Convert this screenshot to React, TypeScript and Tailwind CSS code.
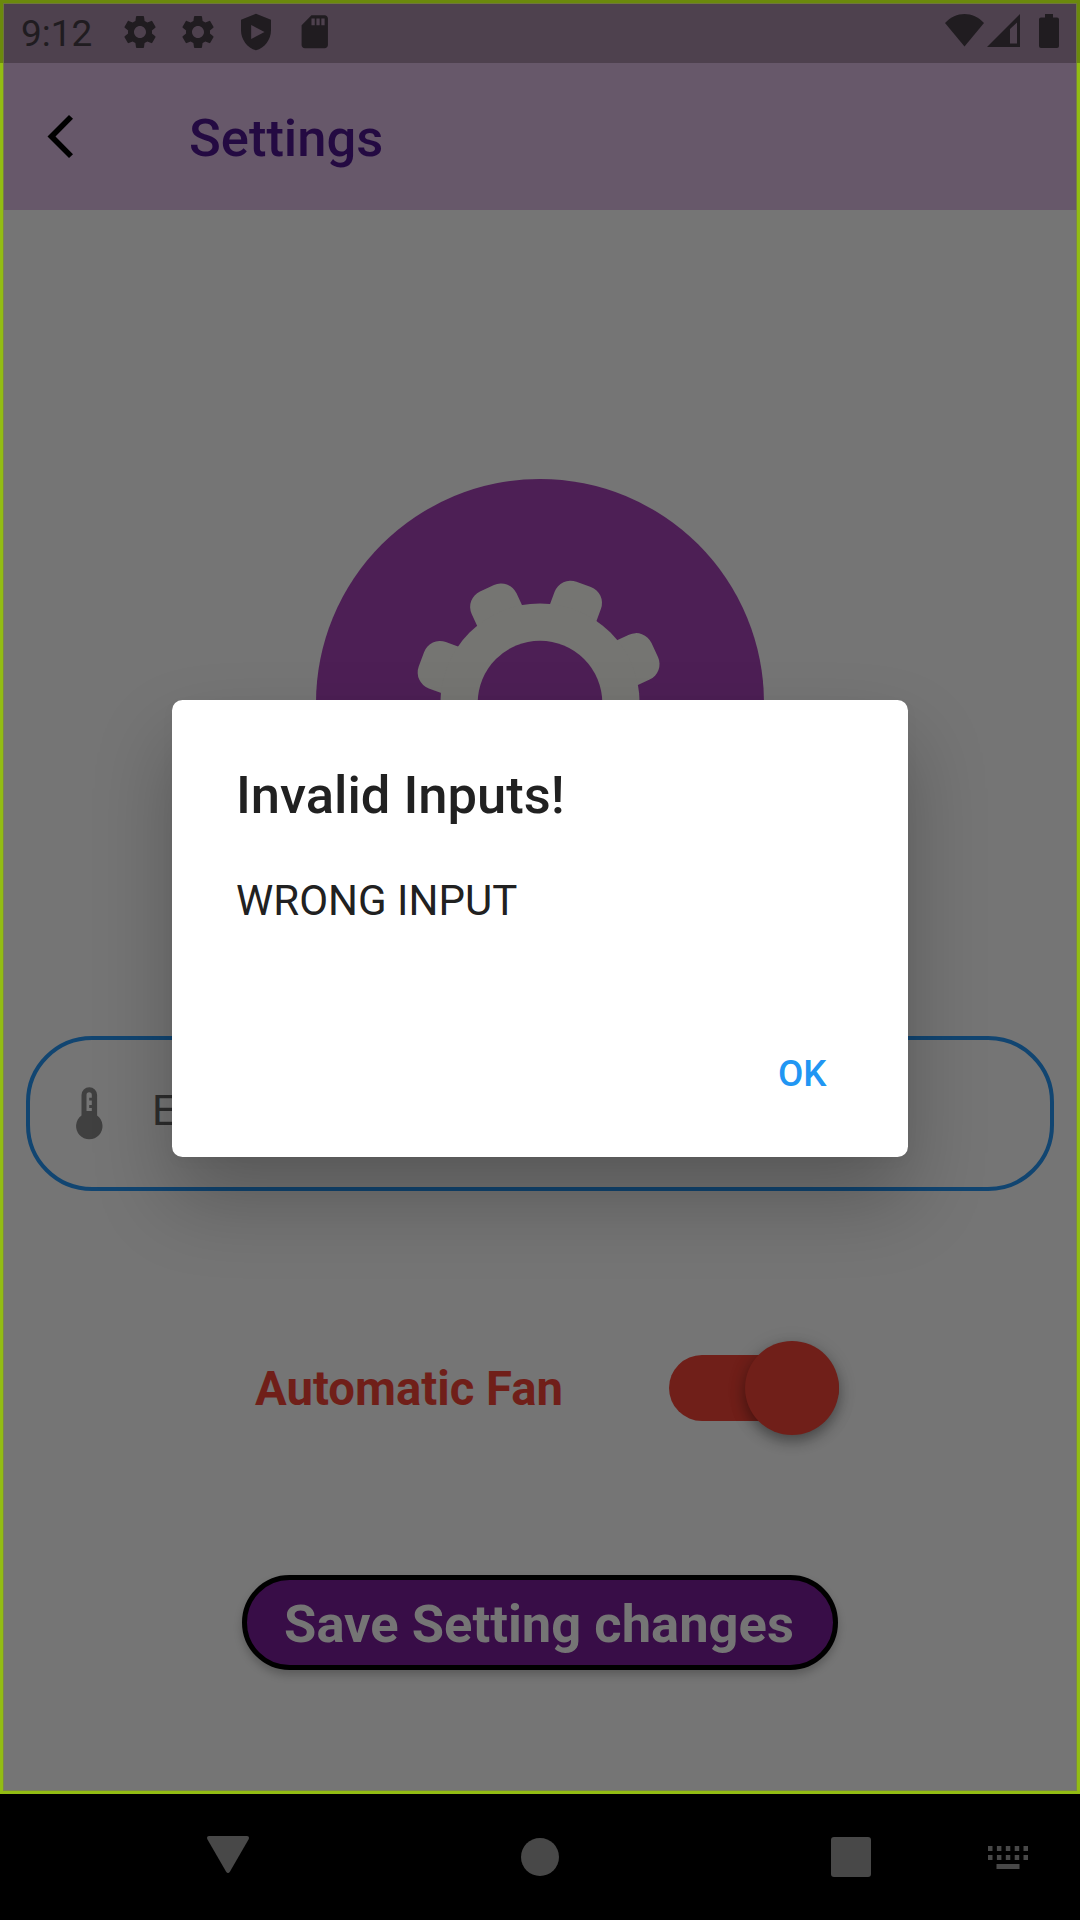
import React from "react";
import { MdSettings, MdSdCard } from "react-icons/md";

function StatusBar() {
  return (
    <div className="flex h-[63px] items-start justify-between bg-[#4e414e] text-[#201c20]">
      <div className="flex items-start">
        <span className="ml-[21px] mt-[12px] w-[99px] text-[37px] leading-[44px]">9:12</span>
        <MdSettings className="mt-[12px] size-[40px]" />
        <MdSettings className="ml-[18px] mt-[12px] size-[40px]" />
        <svg className="ml-[18px] mt-[12px] size-[40px]" viewBox="0 0 24 24" fill="currentColor" fillRule="evenodd">
          <path d="M12 1 3 4.6V11c0 5.55 3.84 10.74 9 12 5.16-1.26 9-6.45 9-12V4.600z M9.100 7.800l8 4.200-8 4.200z" />
        </svg>
        <MdSdCard className="ml-[19px] mt-[12px] size-[39.500px]" />
      </div>
      <div className="flex items-start">
        <svg className="mt-[14px] h-[33px] w-[39px]" viewBox="0 0 39 33" fill="currentColor">
          <path d="M0 9C11-3 28-3 39 9L19.500 32.500z" />
        </svg>
        <svg className="ml-[3px] mt-[14px] h-[33px] w-[33px]" viewBox="0 0 33 33" fill="currentColor" fillRule="evenodd">
          <path d="M33 0v33H0z M30 8.500 23 15v14.500h7z" />
        </svg>
        <svg className="ml-[19px] mr-[21px] mt-[14px] h-[34px] w-[20px]" viewBox="0 0 20 34" fill="currentColor">
          <path d="M6 0h8v3.500h4q2 0 2 2V32q0 2-2 2H2q-2 0-2-2V5.500q0-2 2-2h4z" />
        </svg>
      </div>
    </div>
  );
}

function AppBar() {
  return (
    <div className="flex h-[147px] items-center bg-[#67586a]">
      <svg className="ml-[47px] h-[43px] w-[26px]" viewBox="0 0 26 43">
        <path d="M22 0l4 3.700L8.500 21.500 26 39.300 22 43 .500 21.500z" fill="#000" />
      </svg>
      <h1 className="ml-[116px] mt-[3px] text-[52.500px] font-medium leading-[62px] text-[#240a42]">Settings</h1>
    </div>
  );
}

const teeth = [-69.8, -24.8, 20.2, 65.2, 110.2, 155.2, 200.2, 245.2];

function GearBadge() {
  return (
    <svg className="mt-[269px] size-[448px] shrink-0" viewBox="-224 -224 448 448">
      <circle r="224" fill="#4d1f55" />
      <g fill="#757572">
        {teeth.map((angle) => (
          <rect key={angle} x="-24.7" y="-126.400" width="49.4" height="70" rx="17" transform={`rotate(${angle})`} />
        ))}
        <circle r="99.600" />
      </g>
      <circle r="62.300" fill="#4d1f55" />
    </svg>
  );
}

function TemperatureField() {
  return (
    <div className="mt-[109px] flex h-[155px] w-[1028px] shrink-0 items-center rounded-[66px] border-4 border-[#114571]">
      <svg className="ml-[46px] h-[53px] w-[27px]" viewBox="0 0 27 53">
        <path
          d="M5.500 8a7.800 7.800 0 0 1 15.600 0v20.500a13.200 13.200 0 1 1-15.600 0zM10.500 24h5.300v-3h-2.600v-3h2.600v-4.500h-2.600v-2.800h2.600V8a2.650 2.650 0 0 0-5.300 0z"
          fill="#404040"
          fillRule="evenodd"
        />
      </svg>
      <span className="mb-[5px] ml-[49px] text-[42px] leading-[50px] text-[#2d2d2d]">E</span>
    </div>
  );
}

function FanRow() {
  return (
    <div className="mt-[150px] flex h-[94px] w-full shrink-0 items-center">
      <span className="ml-[255px] mt-[2px] w-[414px] text-[47.250px] font-bold leading-[56px] text-[#701f19]">
        Automatic Fan
      </span>
      <div className="flex h-[66px] w-[170px] items-center justify-end rounded-full bg-[#701f19]">
        <div className="size-[94.500px] shrink-0 rounded-full bg-[#701f19] shadow-[0_6px_14px_rgba(0,0,0,0.36),0_2px_22px_rgba(0,0,0,0.08)]" />
      </div>
    </div>
  );
}

function Dialog() {
  return (
    <div className="flex h-[457px] w-[736px] flex-col rounded-[10.500px] bg-white px-[64px] text-[#212121] shadow-[0_42px_80px_rgba(0,0,0,0.24),0_4px_14px_rgba(0,0,0,0.03)]">
      <h2 className="mt-[64px] text-[52.500px] font-medium leading-[62px]">Invalid Inputs!</h2>
      <p className="mt-[50px] text-[42px] leading-[50px]">WRONG INPUT</p>
      <button className="mr-[17.500px] mt-[126px] self-end text-[36.750px] font-medium leading-[44px] text-[#2196f3]">
        OK
      </button>
    </div>
  );
}

function NavBar() {
  return (
    <div className="flex h-[126px] items-center bg-black text-[#484848]">
      <svg className="mb-[5px] ml-[207px] h-[37px] w-[42px]" viewBox="0 0 42 37" fill="currentColor">
        <path d="M2 0h38q3 0 1.500 3.500L23 35.500q-2 3-4 0L.500 3.500Q-1 0 2 0z" />
      </svg>
      <div className="ml-[272px] size-[38px] rounded-full bg-[#484848]" />
      <div className="ml-[272px] size-[40px] rounded-[3px] bg-[#484848]" />
      <svg className="ml-[117px] mt-px h-[23px] w-[40px]" viewBox="0 0 40 23" fill="currentColor">
        {[0, 8.9, 17.8, 26.7, 35.5].map((x) => (
          <React.Fragment key={x}>
            <rect x={x} y="0" width="4.500" height="5" />
            <rect x={x} y="9" width="4.500" height="5" />
          </React.Fragment>
        ))}
        <rect x="8.500" y="18" width="23" height="5" />
      </svg>
    </div>
  );
}

export default function App() {
  return (
    <div className="relative flex h-[1920px] w-[1080px] flex-col overflow-hidden bg-[#757575] font-['Roboto',sans-serif]">
      <StatusBar />
      <AppBar />
      <main className="flex h-[1584px] flex-col items-center">
        <GearBadge />
        <TemperatureField />
        <FanRow />
        <button className="mt-[140px] flex h-[95px] w-[596px] shrink-0 items-center justify-center rounded-full border-[5.500px] border-black bg-[#380d47] text-[52.500px] font-bold leading-[62px] text-[#757575] shadow-[0_5px_8px_rgba(0,0,0,0.22)]">
          <span className="mr-[2px] mt-[3px]">Save Setting changes</span>
        </button>
      </main>
      <NavBar />
      <div className="absolute inset-x-0 top-0 flex h-[1794px] justify-center pt-[700px]">
        <Dialog />
      </div>
      <div className="absolute inset-x-0 top-0 h-[1794px] border-[3px] border-[#92bc13] shadow-[inset_0_0_0_1px_rgba(125,142,55,0.7)]" />
      <div className="absolute inset-x-0 top-0 h-[63px] border-x-[3px] border-t-[3px] border-[#6b890d]" />
    </div>
  );
}
